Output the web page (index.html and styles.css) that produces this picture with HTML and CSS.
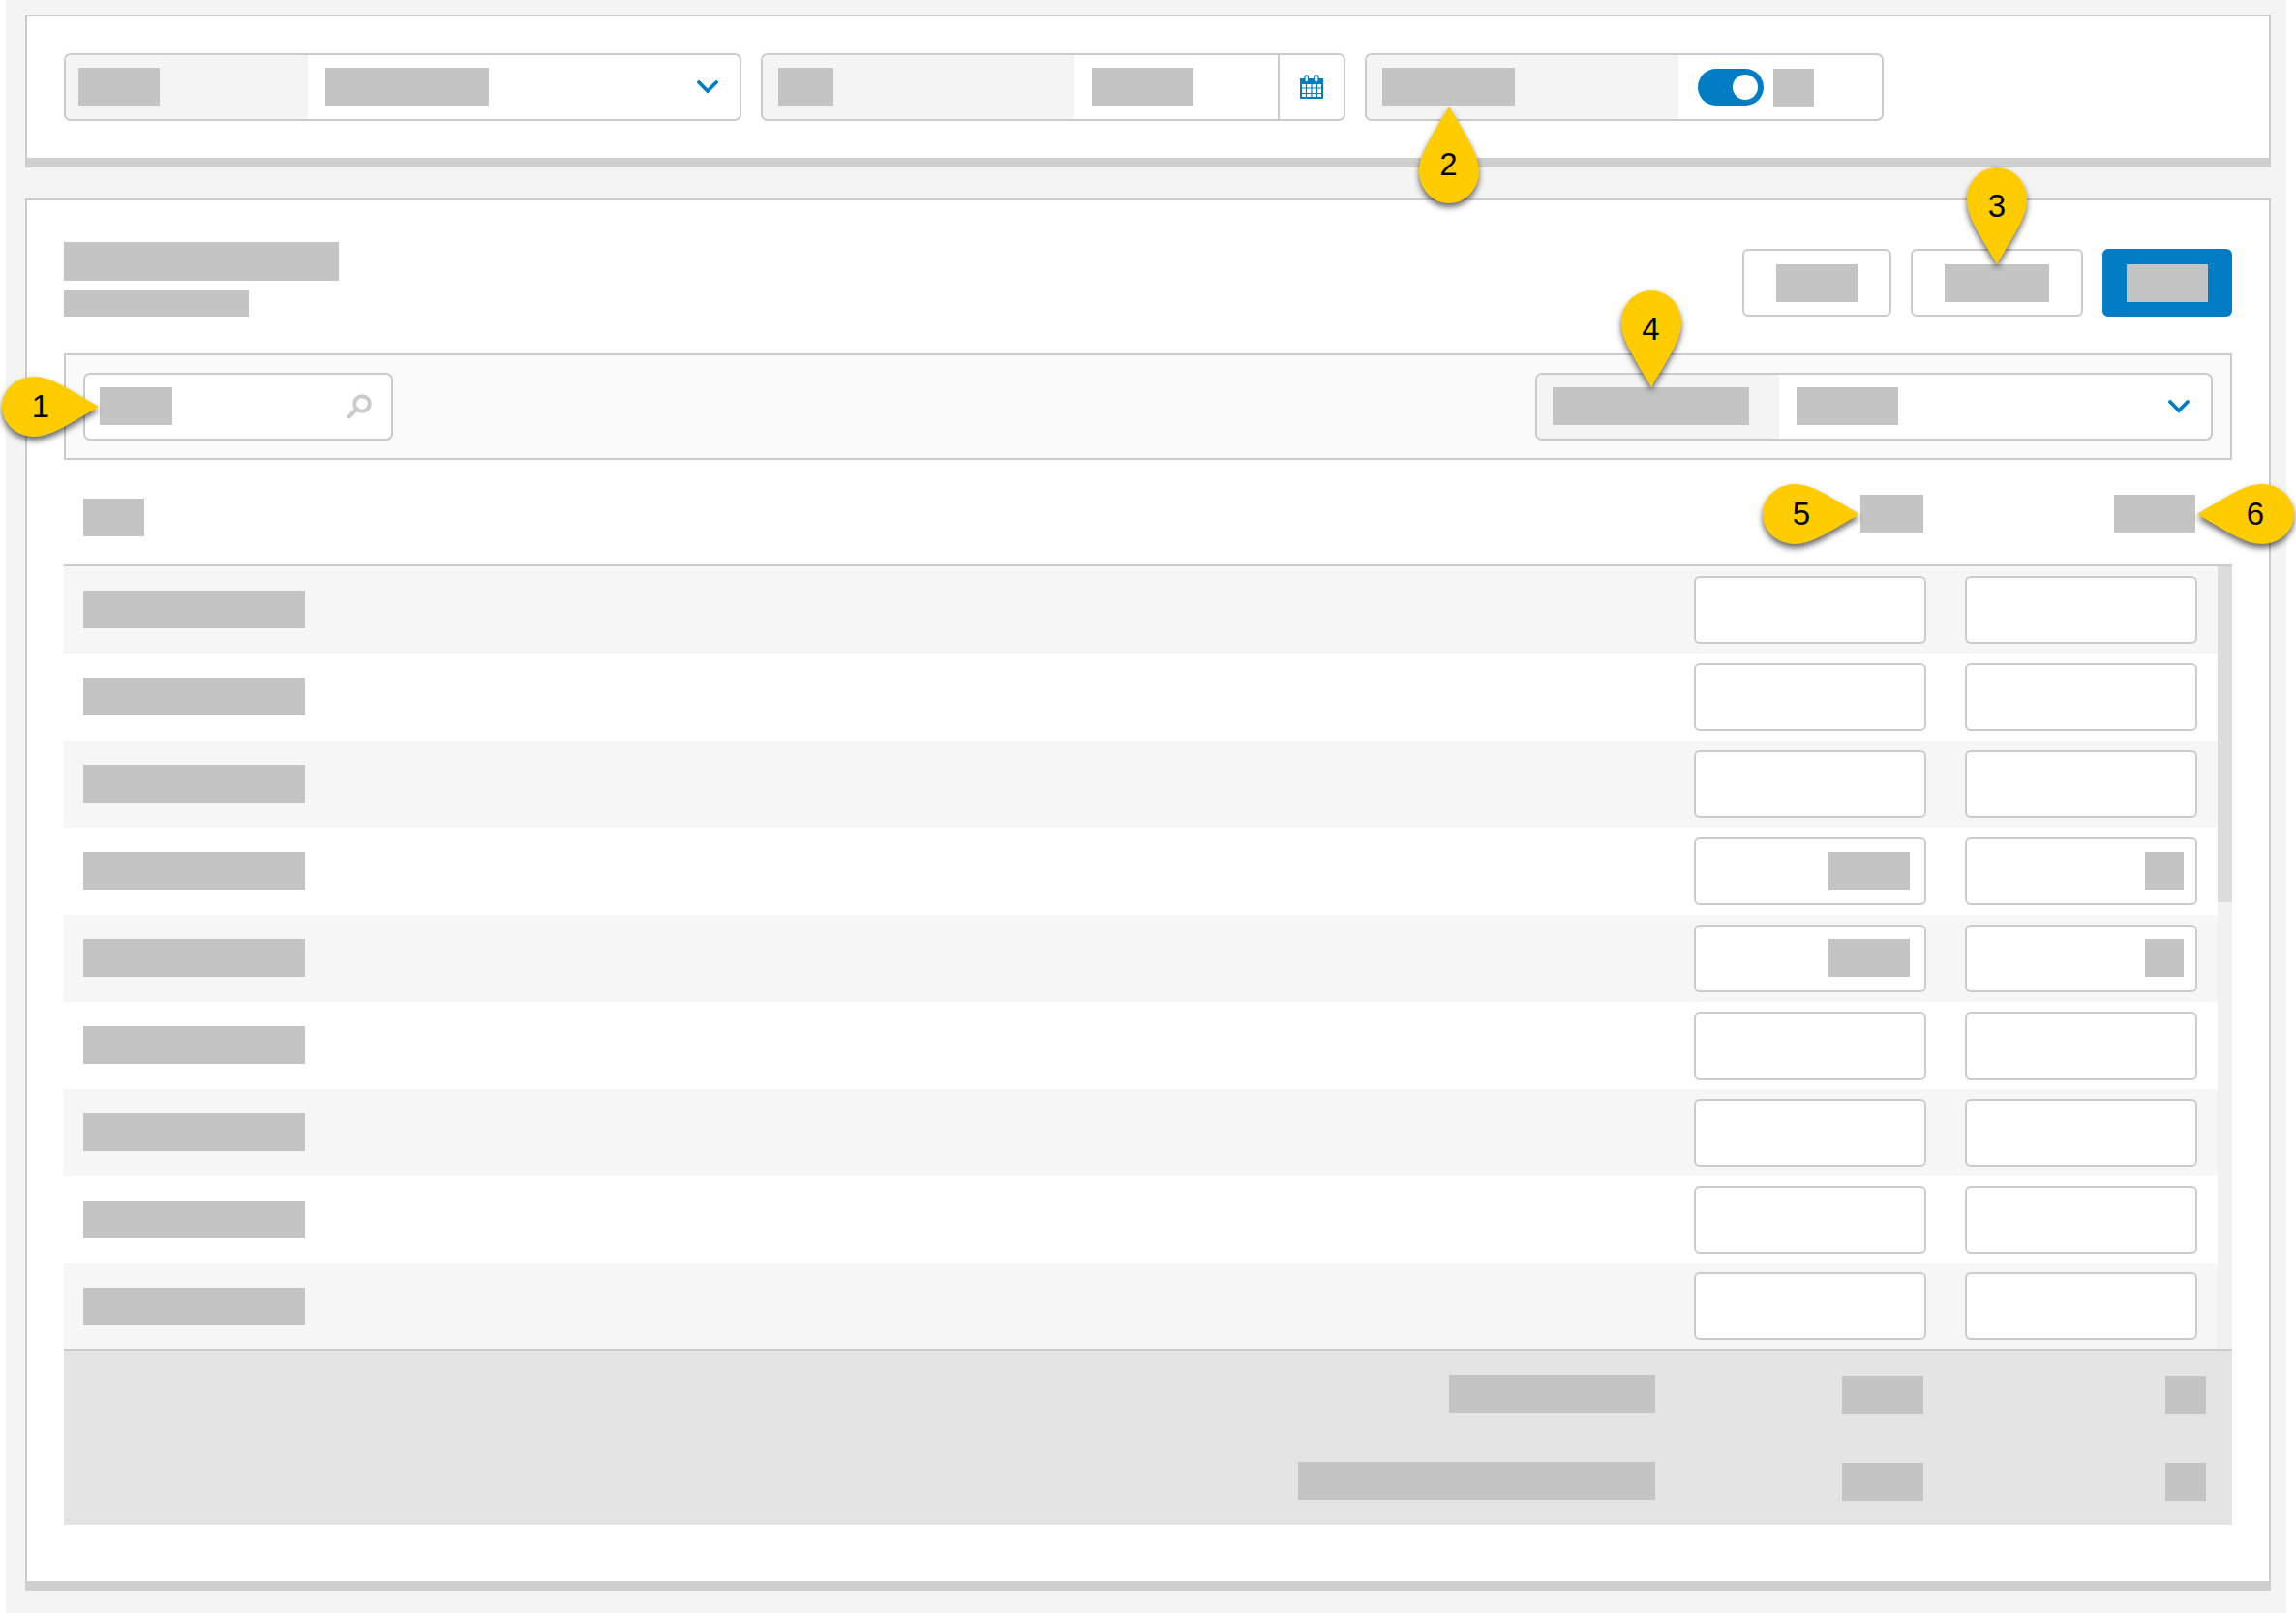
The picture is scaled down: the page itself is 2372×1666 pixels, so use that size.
FILE: index.html
```html
<!DOCTYPE html>
<html lang="en">
<head>
<meta charset="utf-8">
<meta name="viewport" content="width=device-width, initial-scale=1">
<title>Overview</title>
<link rel="stylesheet" href="styles.css">
</head>
<body>
<svg class="defs" aria-hidden="true">
  <symbol id="drop" viewBox="0 0 100 62"><path d="M100 31C66 11 50 0 33 0C15 0 0 14 0 31C0 48 15 62 33 62C50 62 66 51 100 31Z"/></symbol>
  <symbol id="drop-vertical" viewBox="0 0 62 100"><path d="M31 100C11 66 0 50 0 33C0 15 14 0 31 0C48 0 62 15 62 33C62 50 51 66 31 100Z"/></symbol>
  <symbol id="chevron" viewBox="0 0 22 14"><path d="M2 2L11 11L20 2" fill="none" stroke="currentColor" stroke-width="3.800" stroke-linecap="round"/></symbol>
</svg>
<main class="page">
  <section class="panel filters">
    <div class="field field--wide field--tight">
      <label class="field-label" for="group"><span class="skel w-84"></span></label>
      <div class="field-value stack">
        <select id="group" aria-label="Group"><option></option></select>
        <span class="skel w-169"></span>
        <svg class="chevron"><use href="#chevron"/></svg>
      </div>
    </div>
    <div class="field field--date">
      <label class="field-label field-label--wide" for="date"><span class="skel w-57"></span></label>
      <div class="field-value stack">
        <input id="date" type="text" aria-label="Date">
        <span class="skel w-105"></span>
      </div>
      <button class="calendar" type="button" aria-label="Calendar">
        <svg width="24" height="26" viewBox="0 0 24 26">
          <path d="M1 5H23V24H1Z" fill="#fff" stroke="#007dc5" stroke-width="2"/>
          <path d="M0 4H24V10H0Z" fill="#007dc5"/>
          <path d="M6.500 9V24M12 9V24M17.500 9V24M1 14H23M1 19.500H23" stroke="#007dc5" stroke-width="1.200"/>
          <rect x="5" y="1" width="3.500" height="7" rx="1.700" fill="#fff" stroke="#007dc5" stroke-width="1.300"/>
          <rect x="15.500" y="1" width="3.500" height="7" rx="1.700" fill="#fff" stroke="#007dc5" stroke-width="1.300"/>
        </svg>
      </button>
    </div>
    <div class="field field--switch">
      <label class="field-label field-label--wide" for="switch">
        <span class="skel w-137"><span class="pin pin--up"><svg><use href="#drop-vertical"/></svg><b>2</b></span></span>
      </label>
      <div class="field-value switch-value">
        <input class="switch" id="switch" type="checkbox" role="switch" aria-label="Switch" checked>
        <span class="skel w-42"></span>
      </div>
    </div>
  </section>

  <section class="panel">
    <header class="panel-head">
      <div class="titles">
        <span class="skel skel--title"></span>
        <span class="skel skel--subtitle"></span>
      </div>
      <div class="actions">
        <button class="btn" type="button" aria-label="Reset"><span class="skel w-84"></span></button>
        <button class="btn" type="button"><span class="skel w-108"><span class="pin pin--down"><svg><use href="#drop-vertical"/></svg><b>3</b></span></span></button>
        <button class="btn btn--primary" type="button" aria-label="Save"><span class="skel w-84"></span></button>
      </div>
    </header>

    <div class="toolbar">
      <div class="field search">
        <div class="field-value stack">
          <input type="search" aria-label="Search">
          <span class="skel w-75"><span class="pin pin--right"><svg><use href="#drop"/></svg><b>1</b></span></span>
          <svg class="search-icon" viewBox="0 0 26 26"><circle cx="16" cy="10" r="7.800" fill="none" stroke="currentColor" stroke-width="4"/><path d="M10 16L2.500 23.500" stroke="currentColor" stroke-width="4" stroke-linecap="round"/></svg>
        </div>
      </div>
      <div class="field field--wide">
        <label class="field-label" for="view">
          <span class="skel w-203"><span class="pin pin--down"><svg><use href="#drop-vertical"/></svg><b>4</b></span></span>
        </label>
        <div class="field-value stack">
          <select id="view" aria-label="View"><option></option></select>
          <span class="skel w-105"></span>
          <svg class="chevron"><use href="#chevron"/></svg>
        </div>
      </div>
    </div>

    <div class="table-wrap">
      <table class="grid">
        <colgroup><col><col class="col-first"><col class="col-second"></colgroup>
        <thead>
          <tr>
            <th scope="col"><span class="skel w-63"></span></th>
            <th scope="col"><span class="skel w-65"><span class="pin pin--right"><svg><use href="#drop"/></svg><b>5</b></span></span></th>
            <th scope="col"><span class="skel w-84"><span class="pin pin--left"><svg><use href="#drop"/></svg><b>6</b></span></span></th>
          </tr>
        </thead>
        <tbody>
          <tr><td><span class="skel w-229"></span></td><td><div class="cell stack"><input type="text" aria-label="First value"></div></td><td><div class="cell stack"><input type="text" aria-label="Second value"></div></td></tr>
          <tr><td><span class="skel w-229"></span></td><td><div class="cell stack"><input type="text" aria-label="First value"></div></td><td><div class="cell stack"><input type="text" aria-label="Second value"></div></td></tr>
          <tr><td><span class="skel w-229"></span></td><td><div class="cell stack"><input type="text" aria-label="First value"></div></td><td><div class="cell stack"><input type="text" aria-label="Second value"></div></td></tr>
          <tr><td><span class="skel w-229"></span></td><td><div class="cell stack"><input type="text" aria-label="First value"><span class="skel w-84"></span></div></td><td><div class="cell stack"><input type="text" aria-label="Second value"><span class="skel w-40"></span></div></td></tr>
          <tr><td><span class="skel w-229"></span></td><td><div class="cell stack"><input type="text" aria-label="First value"><span class="skel w-84"></span></div></td><td><div class="cell stack"><input type="text" aria-label="Second value"><span class="skel w-40"></span></div></td></tr>
          <tr><td><span class="skel w-229"></span></td><td><div class="cell stack"><input type="text" aria-label="First value"></div></td><td><div class="cell stack"><input type="text" aria-label="Second value"></div></td></tr>
          <tr><td><span class="skel w-229"></span></td><td><div class="cell stack"><input type="text" aria-label="First value"></div></td><td><div class="cell stack"><input type="text" aria-label="Second value"></div></td></tr>
          <tr><td><span class="skel w-229"></span></td><td><div class="cell stack"><input type="text" aria-label="First value"></div></td><td><div class="cell stack"><input type="text" aria-label="Second value"></div></td></tr>
          <tr><td><span class="skel w-229"></span></td><td><div class="cell stack"><input type="text" aria-label="First value"></div></td><td><div class="cell stack"><input type="text" aria-label="Second value"></div></td></tr>
        </tbody>
        <tfoot>
          <tr><td><span class="skel w-213"></span></td><td><span class="skel w-84"></span></td><td><span class="skel w-42"></span></td></tr>
          <tr><td><span class="skel w-369"></span></td><td><span class="skel w-84"></span></td><td><span class="skel w-42"></span></td></tr>
        </tfoot>
      </table>
      <div class="scrollbar"><div class="thumb"></div></div>
    </div>
  </section>
</main>
</body>
</html>
```

FILE: styles.css
```css
:root {
  --line: #cbcbcb;
  --blue: #007dc5;
  --muted: #f4f4f4;
}

* { box-sizing: border-box; }

body {
  margin: 0;
  background: #fff;
  font-family: "Liberation Sans", Arial, sans-serif;
}

.defs { position: absolute; width: 0; height: 0; }

.page {
  display: flex;
  flex-direction: column;
  gap: 32px;
  min-height: 100vh;
  margin: 0 10px 0 6px;
  padding: 15px 16px 20px 20px;
  background: var(--muted);
}

.panel {
  padding: 38px 38px 58px;
  background: #fff;
  border: 2px solid var(--line);
  border-bottom: 10px solid #cfcfcf;
}

.filters {
  display: flex;
  gap: 20px;
  padding-bottom: 38px;
}

/* Placeholder bars */
.skel {
  position: relative;
  display: block;
  flex: none;
  height: 39px;
  background: #c4c4c4;
}
.skel--title { width: 284px; height: 40px; }
.skel--subtitle { width: 191px; height: 27px; }
.w-40 { width: 40px; }
.w-42 { width: 42px; }
.w-57 { width: 57px; }
.w-63 { width: 63px; }
.w-65 { width: 65px; }
.w-75 { width: 75px; }
.w-84 { width: 84px; }
.w-105 { width: 105px; }
.w-108 { width: 108px; }
.w-137 { width: 137px; }
.w-169 { width: 169px; }
.w-203 { width: 203px; }
.w-213 { width: 213px; }
.w-229 { width: 229px; }
.w-369 { width: 369px; }

/* Fields */
.field {
  display: flex;
  height: 70px;
  background: #fff;
  border: 2px solid var(--line);
  border-radius: 7px;
}
.field--wide { flex: 0 1 700px; }
.field--date { flex: 0 1 604px; }
.field--switch { flex: 0 1 536px; }

.field-label {
  flex: 0 0 250px;
  padding: 13px 16px;
  background: var(--muted);
  border-radius: 5px 0 0 5px;
}
.field-label--wide { flex-basis: 322px; }
.field--tight .field-label { padding-left: 13px; }

.field-value { flex: 1; min-width: 0; }

/* Control with its content layered on top */
.stack { display: grid; }
.stack > * { grid-area: 1 / 1; }
.stack > .skel,
.stack > svg { pointer-events: none; }
.stack > .skel { margin: 13px 18px; }

.stack > input,
.stack > select {
  width: 100%;
  height: 100%;
  margin: 0;
  padding: 0 18px;
  border: 0;
  border-radius: 5px;
  background: transparent;
  appearance: none;
  font: inherit;
}

.chevron {
  width: 22px;
  height: 14px;
  margin-right: 22px;
  place-self: center end;
  color: var(--blue);
}

.calendar {
  display: flex;
  align-items: center;
  justify-content: center;
  width: 68px;
  padding: 0;
  border: 0;
  border-left: 2px solid var(--line);
  border-radius: 0 5px 5px 0;
  background: #fff;
}

.switch-value {
  display: flex;
  align-items: center;
  gap: 10px;
  padding-left: 20px;
}
.switch {
  display: flex;
  align-items: center;
  justify-content: flex-end;
  width: 68px;
  height: 38px;
  margin: 0;
  padding: 0 6px;
  border-radius: 19px;
  background: var(--blue);
  appearance: none;
}
.switch::before {
  content: "";
  width: 26px;
  height: 26px;
  border-radius: 50%;
  background: #fff;
}

/* Panel head */
.panel-head {
  display: flex;
  justify-content: space-between;
  align-items: flex-end;
  padding-top: 5px;
}
.titles { display: grid; gap: 10px; }
.actions { display: flex; gap: 20px; }
.btn {
  height: 70px;
  padding: 0 33px;
  border: 2px solid var(--line);
  border-radius: 6px;
  background: #fff;
  font: inherit;
}
.btn--primary {
  padding: 0 23px;
  border-color: var(--blue);
  background: var(--blue);
}

/* Toolbar */
.toolbar {
  display: flex;
  justify-content: space-between;
  margin-top: 38px;
  padding: 18px;
  background: #fafafa;
  border: 2px solid var(--line);
}
.search { flex: 0 1 320px; }
.search .skel { margin-left: 15px; }
.search-icon {
  width: 26px;
  height: 26px;
  margin-right: 20px;
  place-self: center end;
  color: var(--line);
}

/* Table */
.table-wrap { position: relative; }
.grid {
  width: 100%;
  table-layout: fixed;
  border-spacing: 0;
}
.col-first { width: 280px; }
.col-second { width: 296px; }

.grid th {
  height: 110px;
  padding: 36px 23px 0 20px;
  border-bottom: 2px solid var(--line);
  vertical-align: top;
}
.grid th:first-child { padding-top: 40px; }
.grid th:last-child { padding-right: 38px; }
.grid td { height: 90px; padding: 0 20px; }
.grid td:first-child { padding-bottom: 2px; }
.grid th:not(:first-child) .skel,
.grid tfoot .skel { margin-left: auto; }

.grid tbody tr:nth-child(odd) { background: #f6f6f6; }
.grid tbody td:last-child { padding-right: 36px; }
.grid tbody tr:last-child td { height: 88px; padding-bottom: 0; }

.cell {
  height: 70px;
  background: #fff;
  border: 2px solid var(--line);
  border-radius: 6px;
}
.cell > .skel { margin: 13px 15px; justify-self: end; }
.grid td:last-child .cell > .skel { margin-right: 12px; }

.grid tfoot { background: #e4e4e4; }
.grid tfoot tr:first-child td {
  height: 92px;
  border-top: 2px solid var(--line);
}
.grid tfoot td:nth-child(2) { padding-right: 23px; }
.grid tfoot td:last-child { padding-right: 27px; }

.scrollbar {
  position: absolute;
  top: 110px;
  right: 0;
  bottom: 182px;
  width: 15px;
  background: #f1f1f1;
}
.thumb { height: 43%; background: #dcdcdc; }

/* Numbered pins, attached to the bar they point at */
.pin {
  position: absolute;
  z-index: 2;
  display: flex;
  align-items: center;
  justify-content: center;
  width: 100px;
  height: 62px;
}
.pin svg {
  position: absolute;
  inset: 0;
  width: 100%;
  height: 100%;
  overflow: visible;
  fill: #fc0;
  filter: drop-shadow(0 4px 3px rgba(0, 0, 0, .6));
}
.pin b {
  position: relative;
  color: #000;
  font-size: 33px;
  font-weight: 400;
  line-height: 38px;
}
.pin--right { top: calc(50% - 31px); right: calc(100% + 1px); padding-right: 20px; }
.pin--left { top: calc(50% - 31px); left: calc(100% + 2px); padding-left: 20px; }
.pin--left svg { transform: scaleX(-1); }
.pin--up,
.pin--down { left: calc(50% - 31px); width: 62px; height: 100px; }
.pin--up { top: calc(100% + 1px); padding-top: 20px; }
.pin--up svg { transform: scaleY(-1); filter: drop-shadow(0 -4px 3px rgba(0, 0, 0, .6)); }
.pin--down { bottom: 100%; padding-bottom: 20px; }
```
